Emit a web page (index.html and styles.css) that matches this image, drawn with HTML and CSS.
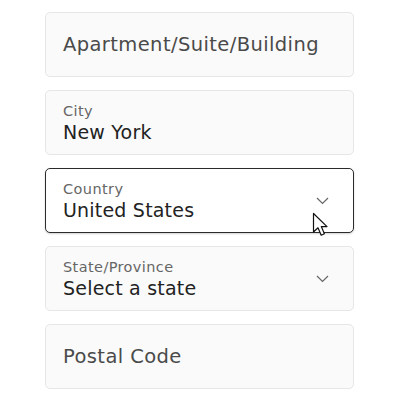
FILE: index.html
```html
<!DOCTYPE html>
<html>
<head>
<meta charset="utf-8">
<link rel="stylesheet" href="styles.css">
</head>
<body>
<div class="form">
  <div class="field"><div class="text"><span class="placeholder">Apartment/Suite/Building</span></div></div>
  <div class="field"><div class="text"><span class="label">City</span><span class="value">New York</span></div></div>
  <div class="field active"><div class="text"><span class="label">Country</span><span class="value">United States</span></div>
    <svg class="chev" width="13" height="8" viewBox="0 0 13 8"><path d="M1 1 L6.5 6.5 L12 1" fill="none" stroke="#666" stroke-width="1.2"/></svg>
  </div>
  <div class="field"><div class="text"><span class="label">State/Province</span><span class="value">Select a state</span></div>
    <svg class="chev" width="13" height="8" viewBox="0 0 13 8"><path d="M1 1 L6.5 6.5 L12 1" fill="none" stroke="#666" stroke-width="1.2"/></svg>
  </div>
  <div class="field"><div class="text"><span class="placeholder">Postal Code</span></div></div>
</div>
<svg class="cursor" width="20" height="28" viewBox="0 0 20 28"><path d="M1.5 1.5 L1.5 20 L6 15.8 L9.2 23.2 L12.4 21.8 L9.3 14.6 L15 14.6 Z" fill="#fff" stroke="#111" stroke-width="1.2" stroke-linejoin="round"/></svg>
</body>
</html>
```
FILE: styles.css
```css
html, body { margin: 0; padding: 0; background: #fff; }
body { font-family: "DejaVu Sans", "Noto Sans", sans-serif; position: relative; width: 400px; height: 400px; overflow: hidden; }
.form { margin-left: 45px; padding-top: 12px; width: 309px; display: flex; flex-direction: column; gap: 13px; }
.field { box-sizing: border-box; height: 65px; border: 1px solid #e6e6e6; border-radius: 5px; background: #fafafa; padding: 0 24px 0 17px; display: flex; align-items: center; justify-content: space-between; }
.field.active { background: #fff; border-color: #2b2b2b; box-shadow: 0 1px 2px rgba(0,0,0,0.18); }
.text { display: flex; flex-direction: column; }
.placeholder { font-size: 19.5px; line-height: 24px; color: #4a4a4a; letter-spacing: 0.4px; }
.label { font-size: 14.5px; line-height: 18px; color: #666; letter-spacing: 0.4px; }
.value { font-size: 19px; line-height: 24px; color: #222; letter-spacing: 0.2px; }
.chev { display: block; }
.cursor { position: absolute; left: 312px; top: 212px; }
```
